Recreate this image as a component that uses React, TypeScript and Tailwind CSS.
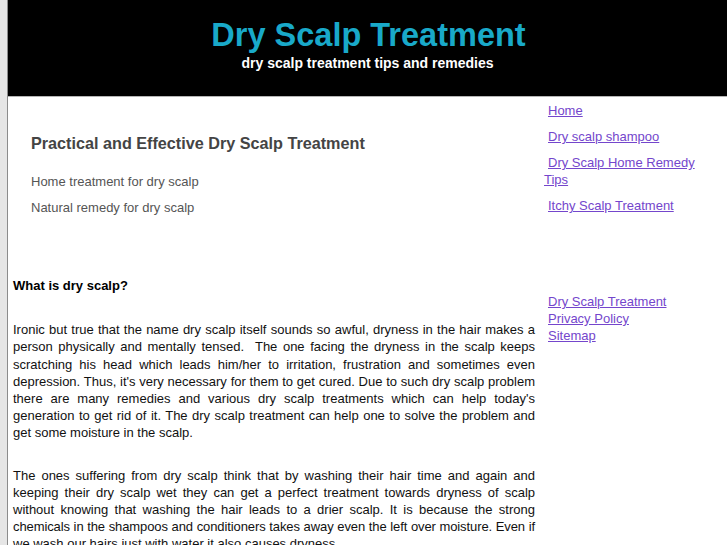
export default function App() {
    const topLinks = ['Home', 'Dry scalp shampoo', 'Dry Scalp Home Remedy Tips', 'Itchy Scalp Treatment']
    const bottomLinks = ['Dry Scalp Treatment', 'Privacy Policy', 'Sitemap']

    return (
        <div className="flex min-h-[545px] bg-[#e6e6e6] font-['Liberation_Sans',Arial,sans-serif]">
            <div className="w-[7px] shrink-0" />
            <div className="flex-1 bg-white border-l border-[#8c8c8c]">
                <header className="h-[97px] bg-black border-b border-[#b5b5b5] flex flex-col items-center pt-[16px]">
                    <h1 className="text-[32.5px] font-bold leading-[38px] text-[#19a9c9] translate-x-[1px]">Dry Scalp Treatment</h1>
                    <p className="text-[14px] font-bold leading-[17px] text-white mt-[1px]">dry scalp treatment tips and remedies</p>
                </header>

                <div className="flex">
                    <main className="w-[532px] shrink-0 px-[5px] text-[13px] leading-[17.2px] text-[#111]">
                        <div className="pt-[37px] pl-[18px]">
                            <h2 className="text-[16.2px] font-bold leading-[18px] text-[#444]">Practical and Effective Dry Scalp Treatment</h2>
                            <p className="mt-[21px] text-[#555] leading-[17px]">Home treatment for dry scalp</p>
                            <p className="mt-[9px] text-[#555] leading-[17px]">Natural remedy for dry scalp</p>
                        </div>

                        <h3 className="mt-[61px] font-bold text-black">What is dry scalp?</h3>

                        <p className="mt-[27px] text-justify">
                            Ironic but true that the name dry scalp itself sounds so awful, dryness in the hair makes a person physically and mentally tensed.&nbsp; The one facing the dryness in the scalp keeps scratching his head which leads him/her to irritation, frustration and sometimes even depression. Thus, it's very necessary for them to get cured. Due to such dry scalp problem there are many remedies and various dry scalp treatments which can help today's generation to get rid of it. The dry scalp treatment can help one to solve the problem and get some moisture in the scalp.
                        </p>

                        <p className="mt-[25px] text-justify">
                            The ones suffering from dry scalp think that by washing their hair time and again and keeping their dry scalp wet they can get a perfect treatment towards dryness of scalp without knowing that washing the hair leads to a drier scalp. It is because the strong{' '}
                            <span className="tracking-[-0.1px]">chemicals in the shampoos and conditioners takes away even the left over moisture. Even if</span>{' '}
                            we wash our hairs just with water it also causes dryness.
                        </p>
                    </main>

                    <aside className="w-[165px] pl-[4px] pt-[5px] text-[13px] leading-[17px] text-[#7446cc]">
                        <ul className="flex flex-col gap-[9px]">
                            {topLinks.map(l => (
                                <li key={l} className="indent-[4px]">
                                    <a href="#" className="underline">{l}</a>
                                </li>
                            ))}
                        </ul>
                        <ul className="mt-[79px] flex flex-col">
                            {bottomLinks.map(l => (
                                <li key={l} className="indent-[4px]">
                                    <a href="#" className="underline">{l}</a>
                                </li>
                            ))}
                        </ul>
                    </aside>
                </div>
            </div>
        </div>
    )
}
